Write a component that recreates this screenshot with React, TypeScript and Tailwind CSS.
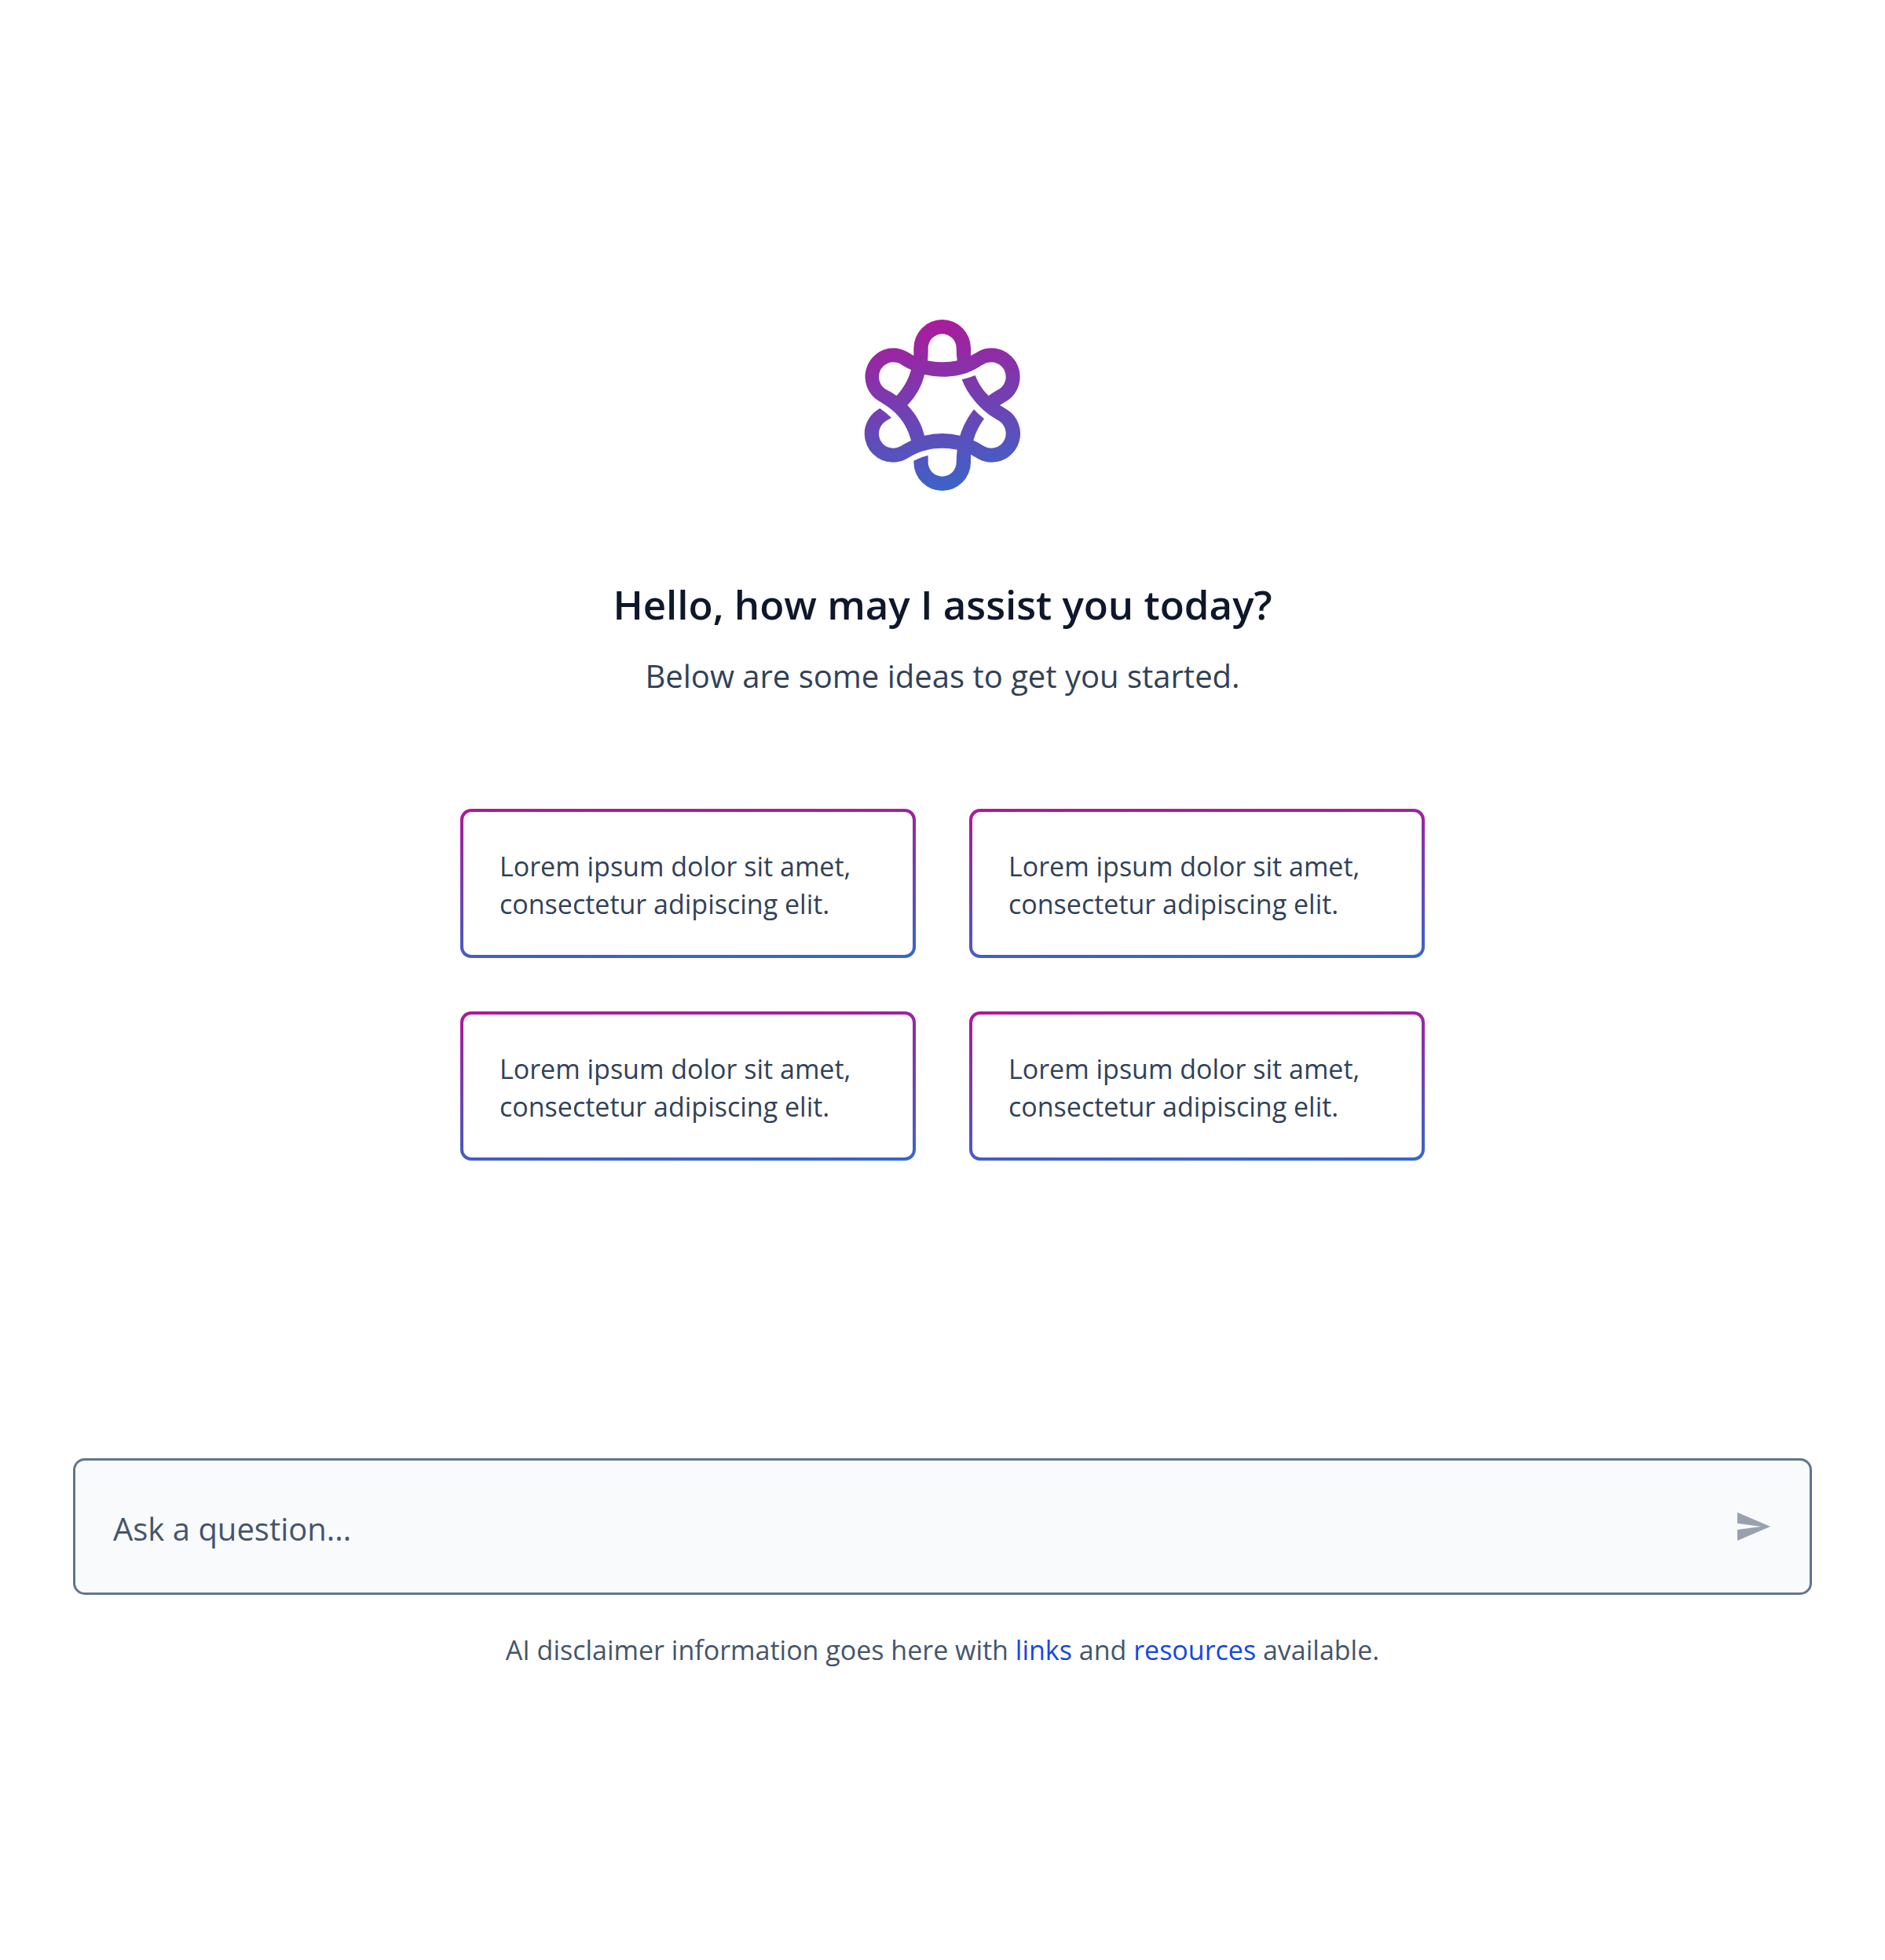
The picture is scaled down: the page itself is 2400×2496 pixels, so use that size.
import React from "react";

const suggestions = [1, 2, 3, 4].map((id) => ({
  id,
  text: "Lorem ipsum dolor sit amet, consectetur adipiscing elit.",
}));

function Logo() {
  return (
    <svg viewBox="0 0 720 756" className="h-[252px] w-60" role="img" aria-label="Assistant logo">
      <defs>
        <linearGradient id="logo-fill" gradientUnits="userSpaceOnUse" x1="310" y1="24" x2="410" y2="732">
          <stop offset="0" stopColor="#b01799" />
          <stop offset="1" stopColor="#3568cb" />
        </linearGradient>
      </defs>
      <path
        fill="url(#logo-fill)"
        fillRule="evenodd"
        d="M250 189V160A109 109 0 0 1 468 160V189L495 174C512 164 529 160 547 160A109 109 0 0 1 656 269C656 308 636 343 605 362L579 378L605 394A109 109 0 0 1 547 596C529 596 512 592 495 582L468 567V596A109 109 0 0 1 250 596V590Q278 575 305 570V596A54 54 0 0 0 413 596Q413 570 416 548Q388 542 359 542C318 542 278 552 245 570L219 585C204 593 187 596 171 596A109 109 0 0 1 62 487C62 447 85 409 121 390Q145 407 165 426L146 437C128 447 117 466 117 487A54 54 0 0 0 171 542C182 542 192 539 201 534L215 526Q228 519 240 513C230 473 208 434 178 406C160 389 140 376 115 361A109 109 0 0 1 171 160C190 160 208 165 225 174Z
        M291 261Q325 269 359 269C400 269 440 262 475 245C492 237 504 228 518 221C527 216 537 214 547 214A55 55 0 0 1 602 269C602 289 592 307 575 317L563 324Q548 333 536 342C513 319 497 295 485 264Q460 274 434 280C448 317 470 350 503 384C528 409 550 423 575 437C592 447 602 466 602 487A55 55 0 0 1 547 542C536 542 526 539 516 533Q498 521 478 512C487 481 501 454 519 430Q497 413 480 394C457 423 440 455 427 494Q395 486 359 486Q323 486 291 494C280 450 260 413 226 378C259 343 281 305 291 261Z
        M303 208Q305 190 305 160A54 54 0 0 1 413 160Q413 185 416 208Q388 214 359 214Q330 214 303 208Z
        M240 243Q222 235 205 224C195 217 183 214 171 214A54 55 0 0 0 117 269C117 288 127 307 143 317L160 326Q173 333 184 342C210 315 230 280 240 243Z"
      />
    </svg>
  );
}

export default function App() {
  return (
    <main className="flex min-h-screen flex-col items-center bg-white px-[93px] pt-[390px] font-['Open_Sans',sans-serif]">
      <Logo />
      <h1 className="mt-[91px] text-center text-[51px] leading-[72px] font-semibold text-slate-900">
        Hello, how may I assist you today?
      </h1>
      <p className="mt-[26px] text-center text-[40px] leading-[60px] text-slate-700">
        Below are some ideas to get you started.
      </p>

      <section aria-label="Suggestions" className="mt-[139px] grid w-full max-w-[1228px] grid-cols-2 gap-[68px]">
        {suggestions.map((s) => (
          <button
            key={s.id}
            type="button"
            className="rounded-[14px] bg-[linear-gradient(177deg,#b01799,#3568cb)] p-1 text-left"
          >
            <span className="block rounded-[10px] bg-white px-[46px] pt-[45px] pb-[41px] text-[34px] leading-[48px] text-slate-700">
              {s.text}
            </span>
          </button>
        ))}
      </section>

      <form
        className="mt-[379px] flex h-[174px] w-full items-center rounded-[15px] border-3 border-slate-500 bg-slate-50 px-12"
        onSubmit={(e) => e.preventDefault()}
      >
        <input
          type="text"
          aria-label="Ask a question"
          placeholder="Ask a question..."
          className="h-full min-w-0 flex-1 bg-transparent pt-1 text-[40px] text-slate-900 outline-none placeholder:text-slate-600"
        />
        <button type="submit" aria-label="Send" className="text-gray-400">
          <svg viewBox="0 0 24 24" className="size-12" fill="currentColor" aria-hidden="true">
            <path d="M2 21 23 12 2 3v7l15 2-15 2z" />
          </svg>
        </button>
      </form>

      <p className="mt-[46px] text-center text-[34px] leading-[48px] text-slate-600">
        AI disclaimer information goes here with{" "}
        <a href="#links" className="text-blue-700">links</a> and{" "}
        <a href="#resources" className="text-blue-700">resources</a> available.
      </p>
    </main>
  );
}
